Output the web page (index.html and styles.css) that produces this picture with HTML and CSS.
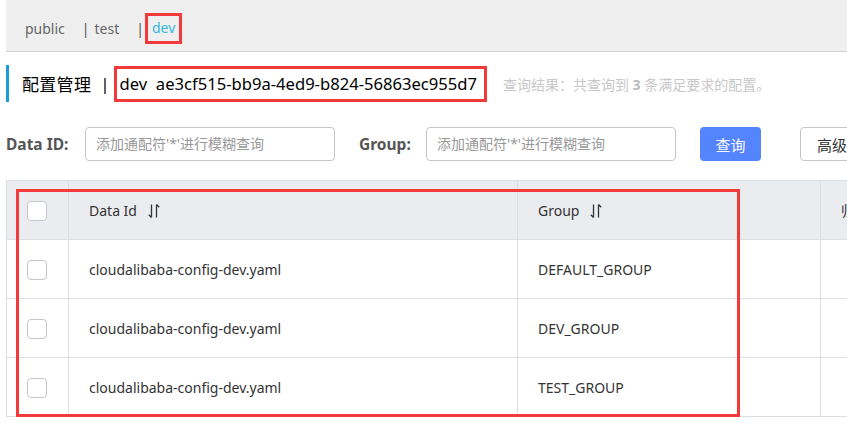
FILE: index.html
```html
<!DOCTYPE html>
<html lang="zh">
<head>
<meta charset="utf-8">
<link rel="stylesheet" href="styles.css">
</head>
<body>
<div class="page">
  <div class="ns-bar">
    <span class="ns">public</span>
    <span class="sep">|</span>
    <span class="ns">test</span>
    <span class="sep">|</span>
    <span class="ns ns-active mark">dev</span>
  </div>

  <div class="title-row">
    <span class="title-text">配置管理</span>
    <span class="title-sep">|</span>
    <span class="title-ns mark">dev&nbsp;&nbsp;ae3cf515-bb9a-4ed9-b824-56863ec955d7</span>
    <span class="title-info">查询结果：共查询到 <b>3</b> 条满足要求的配置。</span>
  </div>

  <div class="search-row">
    <label class="field-label">Data ID:</label>
    <div class="input">添加通配符'*'进行模糊查询</div>
    <label class="field-label group-label">Group:</label>
    <div class="input">添加通配符'*'进行模糊查询</div>
    <button class="btn btn-primary">查询</button>
    <button class="btn btn-normal">高级查询</button>
  </div>

  <div class="table-wrap">
    <table class="table">
      <colgroup>
        <col class="c-check"><col class="c-id"><col class="c-group"><col class="c-rest">
      </colgroup>
      <thead>
        <tr>
          <th><span class="checkbox"></span></th>
          <th>Data Id <svg class="sort" width="12" height="16" viewBox="0 0 12 16"><path d="M3.5 1.5V14.5M3.5 14.5L0.8 11.8M8.5 14.5V1.5M8.5 1.5L11.2 4.2" fill="none" stroke="#333" stroke-width="1.3"/></svg></th>
          <th>Group <svg class="sort" width="12" height="16" viewBox="0 0 12 16"><path d="M3.5 1.5V14.5M3.5 14.5L0.8 11.8M8.5 14.5V1.5M8.5 1.5L11.2 4.2" fill="none" stroke="#333" stroke-width="1.3"/></svg></th>
          <th class="clip">归属应用</th>
        </tr>
      </thead>
      <tbody>
        <tr><td><span class="checkbox"></span></td><td>cloudalibaba-config-dev.yaml</td><td>DEFAULT_GROUP</td><td></td></tr>
        <tr><td><span class="checkbox"></span></td><td>cloudalibaba-config-dev.yaml</td><td>DEV_GROUP</td><td></td></tr>
        <tr><td><span class="checkbox"></span></td><td>cloudalibaba-config-dev.yaml</td><td>TEST_GROUP</td><td></td></tr>
      </tbody>
    </table>
    <div class="table-mark"></div>
  </div>
</div>
</body>
</html>
```
FILE: styles.css
```css
* { box-sizing: border-box; }
html, body { margin: 0; padding: 0; background: #fff; }
body {
  font-family: "Noto Sans", "Noto Sans CJK SC", sans-serif;
  font-size: 14px;
  color: #333;
  width: 847px;
  height: 430px;
  overflow: hidden;
}
.page { padding-left: 6px; }

.ns-bar {
  height: 52px;
  background: #efefef;
  border-bottom: 1px solid #d0d0d0;
  display: flex;
  align-items: center;
  padding-left: 19px;
  padding-top: 6px;
  color: #666;
  font-size: 14px;
}
.ns { line-height: 20px; }
.sep { margin-left: 17px; margin-right: 5px; color: #555; }
.ns-active { color: #33b8e0; }
.mark { border: 3px solid #f23a3a; }
.ns-bar .mark { padding: 2px 4px 3px 4px; margin-left: -4px; }

.title-row {
  display: flex;
  align-items: center;
  height: 37px;
  margin-top: 13px;
  border-left: 3px solid #189fd8;
  padding-left: 13px;
  white-space: nowrap;
}
.title-text { font-size: 17px; color: #000; letter-spacing: 0.3px; }
.title-sep { font-size: 17px; color: #000; margin: 0 4px 0 9px; }
.title-ns {
  font-size: 16.6px;
  color: #000;
  height: 36px;
  line-height: 30px;
  padding: 0 7px 0 3px;
}
.title-info { margin-left: 16px; font-size: 14px; color: #c8c8c8; }
.title-info b { color: #bbb; }

.search-row {
  display: flex;
  align-items: center;
  margin-top: 25px;
  height: 34px;
  white-space: nowrap;
}
.search-row > * { flex-shrink: 0; }
.field-label { font-weight: bold; color: #555; font-size: 15.5px; width: 79px; }
.group-label { margin-left: 24px; width: 67px; }
.input {
  width: 250px;
  height: 34px;
  border: 1px solid #c4c6cf;
  border-radius: 4px;
  padding-left: 10px;
  line-height: 32px;
  color: #999;
  font-size: 14px;
  white-space: nowrap;
}
.btn {
  height: 34px;
  border-radius: 4px;
  font-family: inherit;
  font-size: 15px;
  padding: 0;
}
.btn-primary {
  margin-left: 24px;
  width: 61px;
  background: #5584ff;
  border: none;
  color: #fff;
}
.btn-normal {
  margin-left: 39px;
  width: 90px;
  background: #fff;
  border: 1px solid #c4c6cf;
  color: #333;
  text-align: left;
  padding-left: 16px;
}

.table-wrap { position: relative; margin-top: 19px; }
.table {
  border-collapse: collapse;
  table-layout: fixed;
  width: 880px;
  border-left: 1px solid #dcdee3;
}
.c-check { width: 62px; }
.c-id { width: 449px; }
.c-group { width: 303px; }
.c-rest { width: 66px; }
.table th, .table td {
  border: 1px solid #dcdee3;
  text-align: left;
  padding: 0 0 0 20px;
  font-weight: normal;
  color: #333;
  font-size: 14px;
  white-space: nowrap;
  overflow: hidden;
}
.table th { background: #ebecf0; height: 59px; }
.table td { height: 59px; }
.checkbox {
  display: inline-block;
  width: 20px;
  height: 20px;
  border: 1px solid #c4c6cf;
  border-radius: 4px;
  background: #fff;
  vertical-align: middle;
}
.sort { vertical-align: -3px; margin-left: 7px; }
.table-mark {
  position: absolute;
  left: 10px;
  top: 9px;
  width: 724px;
  height: 228px;
  border: 3px solid #f23a3a;
  pointer-events: none;
}
```
